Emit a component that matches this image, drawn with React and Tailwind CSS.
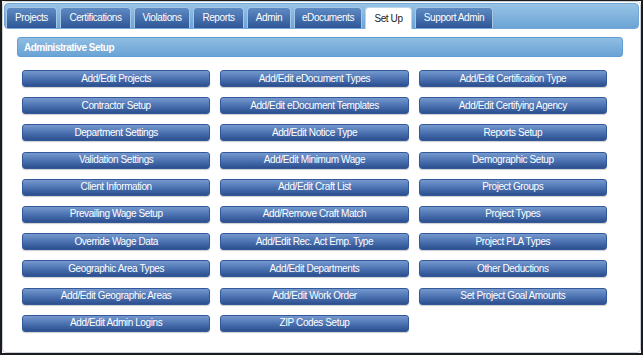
import React from 'react';

const tabs = [
  { label: 'Projects', w: 'w-[51px]' },
  { label: 'Certifications', w: 'w-[71px]' },
  { label: 'Violations', w: 'w-[56px]' },
  { label: 'Reports', w: 'w-[51px]' },
  { label: 'Admin', w: 'w-[44px]' },
  { label: 'eDocuments', w: 'w-[68px]' },
  { label: 'Set Up', w: 'w-[47px]', active: true },
  { label: 'Support Admin', w: 'w-[78px]' },
];

// listed row by row, three per row
const buttons = [
  'Add/Edit Projects', 'Add/Edit eDocument Types', 'Add/Edit Certification Type',
  'Contractor Setup', 'Add/Edit eDocument Templates', 'Add/Edit Certifying Agency',
  'Department Settings', 'Add/Edit Notice Type', 'Reports Setup',
  'Validation Settings', 'Add/Edit Minimum Wage', 'Demographic Setup',
  'Client Information', 'Add/Edit Craft List', 'Project Groups',
  'Prevailing Wage Setup', 'Add/Remove Craft Match', 'Project Types',
  'Override Wage Data', 'Add/Edit Rec. Act Emp. Type', 'Project PLA Types',
  'Geographic Area Types', 'Add/Edit Departments', 'Other Deductions',
  'Add/Edit Geographic Areas', 'Add/Edit Work Order', 'Set Project Goal Amounts',
  'Add/Edit Admin Logins', 'ZIP Codes Setup',
];

const App = () => {
  return (
    <div className="w-[643px] h-[355px] overflow-hidden bg-white border-l-2 border-t border-r-2 border-b-2 border-[#1c1c1c] font-['Liberation_Sans',Arial,sans-serif]">
      <div className="h-full rounded-[4px] border border-[#c9d0d8] bg-white p-px">
        {/* Tab bar */}
        <div className="h-[26px] rounded-[4px] border border-[#74a8d6] bg-linear-to-b from-[#97c3e6] to-[#6ba4d5] flex items-end gap-[3px] pl-px">
          {tabs.map((t) => (
            <div
              key={t.label}
              className={`${t.w} flex items-center justify-center rounded-t-[4px] border border-b-0 text-[10px] tracking-[-0.4px] leading-none ${
                t.active
                  ? 'h-[22px] -mb-px bg-white border-[#b9d4ec] text-[#222]'
                  : 'h-[21px] bg-linear-to-b from-[#5f8bc4] to-[#2f5697] border-[#a6c6e5] text-white'
              }`}
            >
              {t.label}
            </div>
          ))}
        </div>

        {/* Section header */}
        <div className="mt-[8px] ml-[13px] mr-[16px] h-[20px] rounded-[3px] border border-[#5f9dd2] bg-linear-to-b from-[#8fbde2] to-[#69a3d5] flex items-center pl-[6px]">
          <span className="text-[10px] tracking-[-0.5px] font-bold text-white">Administrative Setup</span>
        </div>

        {/* Setup buttons */}
        <div className="mt-[13px] ml-[18px] w-[585px] grid grid-cols-3 gap-x-[10px] gap-y-[10.2px]">
          {buttons.map((b) => (
            <button
              key={b}
              className="h-[17px] rounded-[3px] border border-[#34599a] bg-linear-to-b from-[#7599ce] via-[#4d73b2] to-[#2c4f8f] text-white text-[10px] tracking-[-0.4px] leading-none shadow-[0_1px_1px_rgba(0,0,0,0.2)]"
            >
              {b}
            </button>
          ))}
        </div>
      </div>
    </div>
  );
};

export default App;
